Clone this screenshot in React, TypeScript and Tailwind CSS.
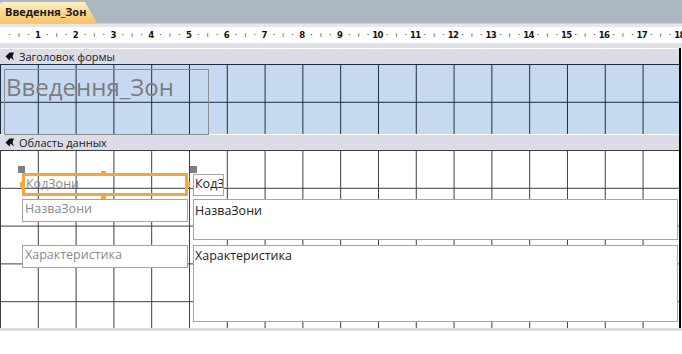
import React from 'react';

const font = "font-['Segoe_UI','Open_Sans','Noto_Sans',sans-serif]";

function SectionIcon() {
  return (
    <svg width="10" height="9" viewBox="0 0 10 9" className="shrink-0">
      <path d="M9 0.5 L4.5 0.5 L0.5 4.5 L4.5 8.5 L5.5 5.5 L9 8.5 L7.5 4.5 Z" fill="#111" />
    </svg>
  );
}

function SectionBar({ title }: { title: string }) {
  return (
    <div className="flex h-[16px] items-center gap-[4px] border-t border-white bg-[#dcdce6] pl-[5px] text-[11px] leading-none text-[#1a1a1a]">
      <SectionIcon />
      <span>{title}</span>
    </div>
  );
}

function Ruler() {
  const slots: string[] = [];
  for (let n = 0; n <= 18; n++) {
    slots.push(n === 0 ? '' : String(n), '·', 'ı', '·');
  }
  return (
    <div className="h-[16px] overflow-hidden bg-white">
      <div className="ml-[-4.7px] flex h-full items-center">
        {slots.map((s, i) => (
          <div
            key={i}
            className={`flex w-[9.45px] shrink-0 justify-center whitespace-nowrap font-['DejaVu_Sans_Condensed','Liberation_Sans',sans-serif] leading-none text-[#111] ${
              i % 4 === 0 ? 'text-[9.5px] font-semibold tracking-[-0.6px]' : i % 4 === 2 ? 'text-[7px]' : 'text-[9px]'
            }`}
          >
            {s}
          </div>
        ))}
      </div>
    </div>
  );
}

export default function App() {
  return (
    <div className={`${font} h-[354px] w-[682px] overflow-hidden bg-white`}>
      {/* Document tab strip */}
      <div className="h-[23px] bg-[#adb7c2] pt-[2px]">
        <div className="flex h-[21px] w-[97px] items-center rounded-tl-[3px] bg-gradient-to-b from-[#fff0c8] via-[#fcd98e] to-[#f7c46a] pl-[5px] text-[11px] font-bold text-[#1b1b1b] [clip-path:polygon(0_0,85px_0,97px_100%,0_100%)]">
          Введення_Зон
        </div>
      </div>
      <div className="h-[4px] border-t border-[#c9ccd4] bg-[#e6e6ee]" />

      <Ruler />
      <div className="h-[5px] bg-[#dfdfe7]" />

      <div className="w-[681px] border-r-2 border-black">
        <SectionBar title="Заголовок формы" />

        {/* Form header */}
        <div className="relative h-[70px] bg-[#c6d9f0] bg-[linear-gradient(to_right,#1e2c42_1px,transparent_1px),linear-gradient(to_bottom,#1e2c42_1px,transparent_1px)] bg-[size:37.8px_37.8px] bg-[position:37.8px_37.8px]">
          <div className="absolute left-[4px] top-[5px] h-[66px] w-[205px] border border-[#8d8d8d] pl-[1px] pt-[2px] text-[24px] leading-[30px] text-[#7d7d7d]">
            Введення_Зон
          </div>
        </div>

        <SectionBar title="Область данных" />

        {/* Detail */}
        <div className="relative h-[178px] bg-white bg-[linear-gradient(to_right,#3d3d3d_1px,transparent_1px),linear-gradient(to_bottom,#3d3d3d_1px,transparent_1px)] bg-[size:37.8px_37.8px] bg-[position:37.8px_37.8px]">
          {/* selected label */}
          <div className="absolute left-[22px] top-[23px] h-[23px] w-[166px] border-[3px] border-[#f7a43c] pl-[1px] text-[12.5px] leading-[16px] text-[#8a8a8a]">
            КодЗони
          </div>
          <div className="absolute left-[18px] top-[16px] h-[7px] w-[7px] bg-[#7f8083]" />
          <div className="absolute left-[190px] top-[16px] h-[7px] w-[7px] bg-[#7f8083]" />
          <div className="absolute left-[101px] top-[21px] h-[5px] w-[5px] bg-[#f7a43c]" />
          <div className="absolute left-[101px] top-[44px] h-[5px] w-[5px] bg-[#f7a43c]" />
          <div className="absolute left-[20px] top-[32px] h-[5px] w-[5px] bg-[#f7a43c]" />
          <div className="absolute left-[185px] top-[32px] h-[5px] w-[5px] bg-[#f7a43c]" />

          <div className="absolute left-[193px] top-[24px] h-[22px] w-[31px] overflow-hidden whitespace-nowrap border border-[#a6a6a6] bg-white pl-[1px] text-[12.5px] leading-[18px] text-[#222]">
            КодЗони
          </div>

          <div className="absolute left-[22px] top-[49px] h-[23px] w-[166px] border border-[#a3a3a3] bg-white pl-[2px] text-[12.5px] leading-[18px] text-[#8a8a8a]">
            НазваЗони
          </div>
          <div className="absolute left-[193px] top-[49px] h-[41px] w-[485px] border border-[#a6a6a6] bg-white pl-[1px] pt-[2px] text-[12.5px] leading-[18px] text-[#222]">
            НазваЗони
          </div>

          <div className="absolute left-[22px] top-[95px] h-[23px] w-[166px] border border-[#a3a3a3] bg-white pl-[2px] text-[12.5px] leading-[18px] text-[#8a8a8a]">
            Характеристика
          </div>
          <div className="absolute left-[193px] top-[95px] h-[77px] w-[485px] border border-[#a6a6a6] bg-white pl-[1px] pt-[1px] text-[12.5px] leading-[18px] text-[#222]">
            Характеристика
          </div>
        </div>
      </div>
      <div className="h-[3px] bg-[#dcdce4]" />
    </div>
  );
}
